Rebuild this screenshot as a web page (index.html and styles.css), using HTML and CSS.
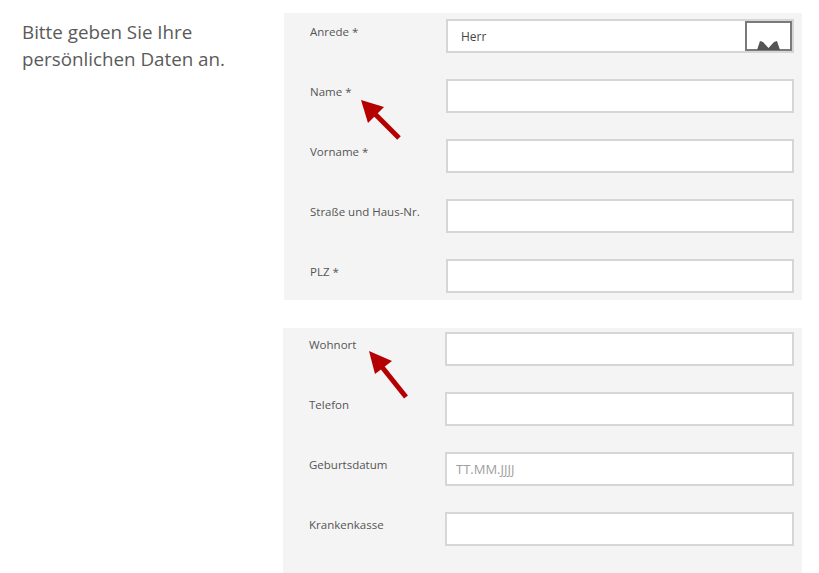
FILE: index.html
```html
<!DOCTYPE html>
<html lang="de">
<head>
<meta charset="utf-8">
<title>Persönliche Daten</title>
<link rel="stylesheet" href="styles.css">
</head>
<body>
<div class="page">
  <div class="intro">Bitte geben Sie Ihre persönlichen Daten an.</div>
  <div class="forms">
    <div class="panel panel-1">
      <div class="row">
        <label class="lbl">Anrede *</label>
        <div class="field select">
          <span class="value">Herr</span>
          <span class="drop">
            <svg width="47" height="30" viewBox="0 0 47 30">
              <rect x="1" y="1" width="45" height="28" fill="#fff" stroke="#7a7a7a" stroke-width="2"/>
              <polygon points="12,29 15,20 18,21 23.5,27 29,21 32,20 35,29" fill="#555"/>
            </svg>
          </span>
        </div>
      </div>
      <div class="row"><label class="lbl">Name *</label><div class="field"></div></div>
      <div class="row"><label class="lbl">Vorname *</label><div class="field"></div></div>
      <div class="row"><label class="lbl">Straße und Haus-Nr.</label><div class="field"></div></div>
      <div class="row"><label class="lbl">PLZ *</label><div class="field"></div></div>
    </div>
    <div class="panel panel-2">
      <div class="row"><label class="lbl">Wohnort</label><div class="field"></div></div>
      <div class="row"><label class="lbl">Telefon</label><div class="field"></div></div>
      <div class="row"><label class="lbl">Geburtsdatum</label><div class="field"><span class="placeholder">TT.MM.JJJJ</span></div></div>
      <div class="row"><label class="lbl">Krankenkasse</label><div class="field"></div></div>
    </div>
  </div>
</div>
<svg class="arrow arrow-1" width="60" height="60" viewBox="0 0 60 60">
  <line x1="45" y1="45" x2="16" y2="16" stroke="#b40000" stroke-width="5"/>
  <polygon points="7,7 30,14 14,30" fill="#b40000"/>
</svg>
<svg class="arrow arrow-2" width="60" height="60" viewBox="0 0 60 60">
  <line x1="44" y1="53" x2="16" y2="18" stroke="#b40000" stroke-width="5"/>
  <polygon points="7,7 30,17 13,30" fill="#b40000"/>
</svg>
</body>
</html>
```
FILE: styles.css
```css
html, body {
  margin: 0;
  padding: 0;
  background: #fff;
}
body {
  font-family: "Open Sans", "Noto Sans", sans-serif;
  color: #555;
  position: relative;
  width: 819px;
  height: 573px;
  overflow: hidden;
}
.page {
  display: flex;
  align-items: flex-start;
}
.intro {
  width: 240px;
  padding: 19px 0 0 22px;
  font-size: 18.8px;
  line-height: 27px;
  color: #5a5a5a;
  flex: 0 0 auto;
  margin-right: 22px;
}
.forms {
  display: flex;
  flex-direction: column;
  gap: 28px;
  padding-top: 13px;
}
.panel {
  width: 518px;
  background: #f4f4f4;
  box-sizing: border-box;
  padding: 6px 8px 7px 26px;
  display: flex;
  flex-direction: column;
  gap: 26px;
}
.panel-2 {
  width: 519px;
  padding-top: 4px;
  padding-bottom: 40px;
  margin-left: -1px;
}
.row {
  display: flex;
  align-items: flex-start;
}
.lbl {
  width: 136px;
  flex: 0 0 auto;
  font-size: 11.5px;
  line-height: 16px;
  padding-top: 5px;
  color: #555;
}
.field {
  width: 348px;
  height: 34px;
  box-sizing: border-box;
  background: #fff;
  border: 2px solid #d6d6d6;
  display: flex;
  align-items: center;
  font-size: 12px;
}
.panel-2 .field {
  width: 349px;
}
.select .value {
  flex: 1;
  padding-left: 13px;
  color: #444;
}
.select .drop {
  display: flex;
  height: 30px;
}
.placeholder {
  padding-left: 9px;
  color: #a0a0a0;
  font-size: 13px;
}
.arrow {
  position: absolute;
}
.arrow-1 {
  left: 354px;
  top: 93px;
}
.arrow-2 {
  left: 362px;
  top: 344px;
}
```
